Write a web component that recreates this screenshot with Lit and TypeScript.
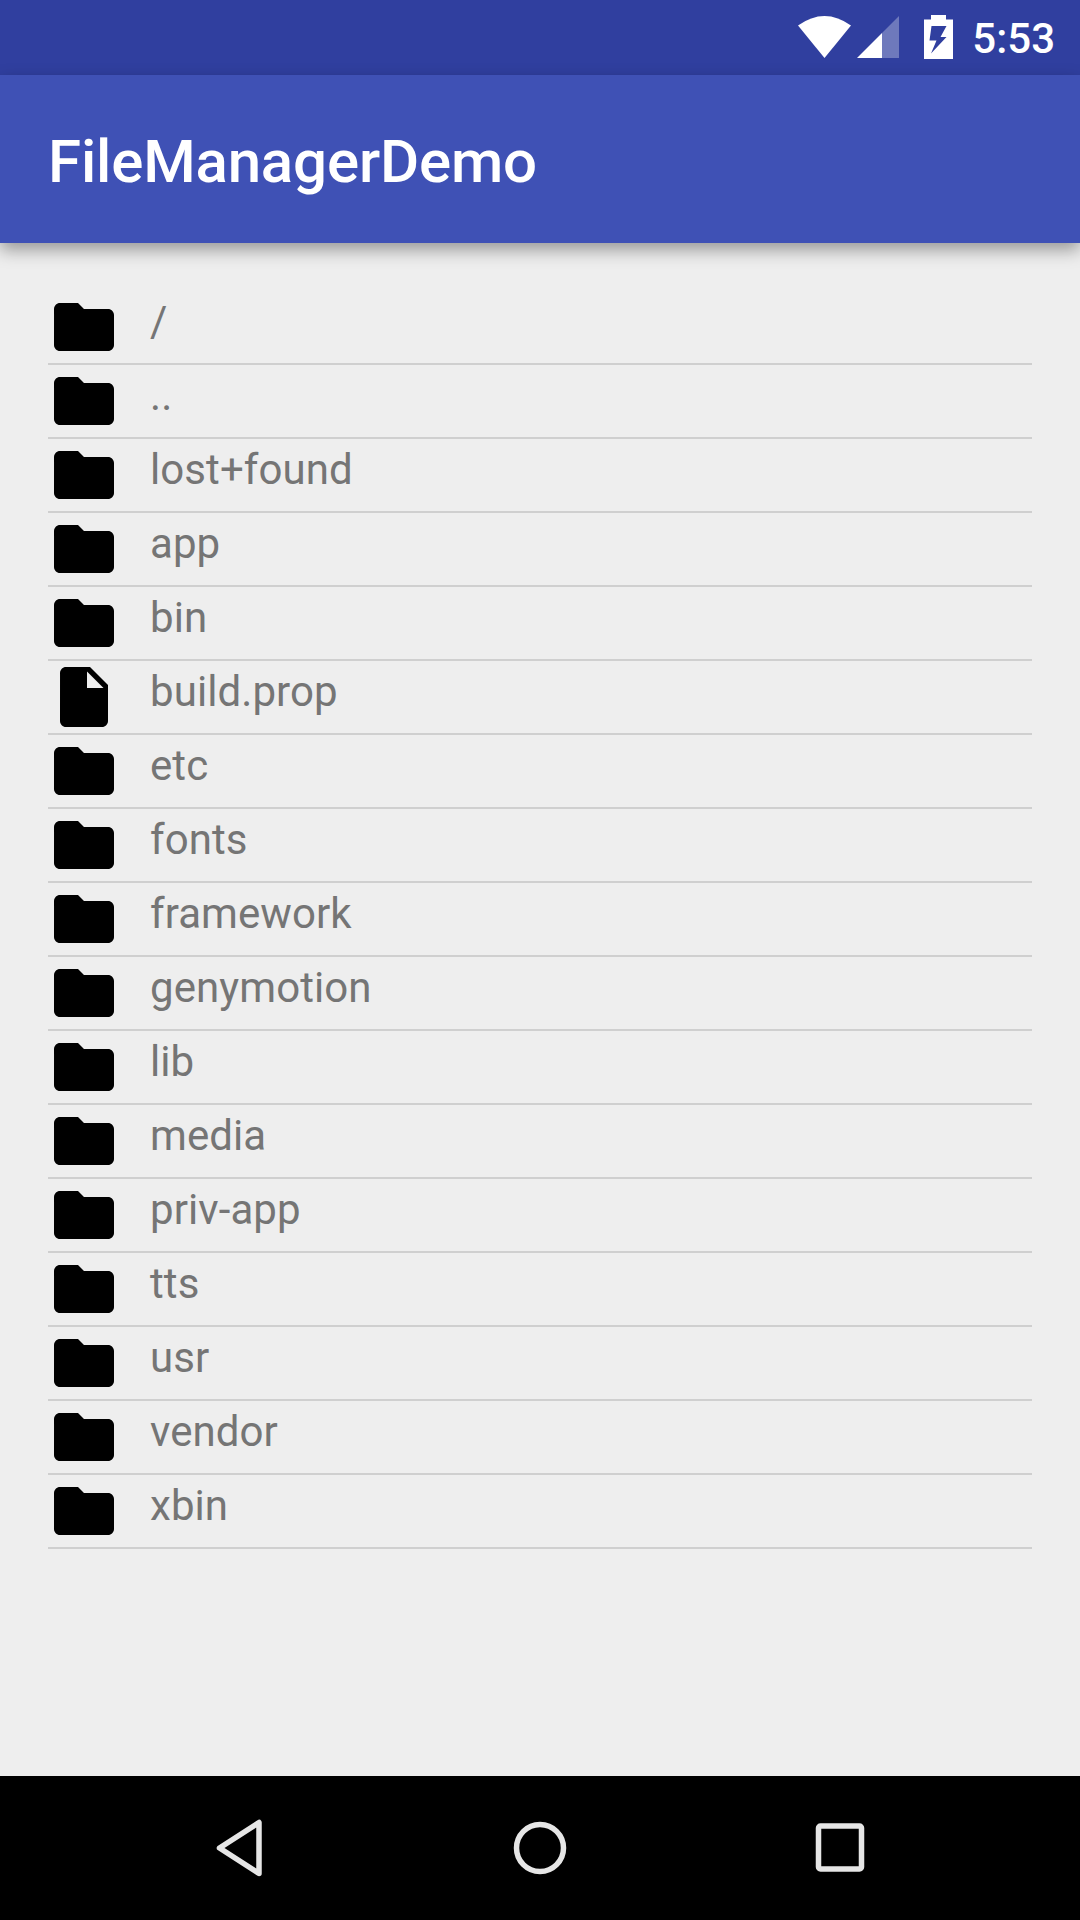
import { LitElement, html, css, svg } from "lit";
import { customElement } from "lit/decorators.js";

const FOLDER = "M10 4H4c-1.1 0-1.99.9-1.99 2L2 18c0 1.1.9 2 2 2h16c1.1 0 2-.9 2-2V8c0-1.1-.9-2-2-2h-8l-2-2z";
const FILE = "M6 2c-1.1 0-1.99.9-1.99 2L4 20c0 1.1.89 2 1.99 2H18c1.1 0 2-.9 2-2V8l-6-6H6zm7 7V3.5L18.5 9H13z";

const ENTRIES: { name: string; file?: boolean }[] = [
  { name: "/" }, { name: ".." }, { name: "lost+found" }, { name: "app" }, { name: "bin" },
  { name: "build.prop", file: true }, { name: "etc" }, { name: "fonts" }, { name: "framework" },
  { name: "genymotion" }, { name: "lib" }, { name: "media" }, { name: "priv-app" }, { name: "tts" },
  { name: "usr" }, { name: "vendor" }, { name: "xbin" },
];

@customElement("app-root")
export class AppRoot extends LitElement {
  static styles = css`
    :host {
      display: flex;
      flex-direction: column;
      width: 1080px;
      height: 1920px;
      background: #eeeeee;
      font-family: Roboto, "Liberation Sans", sans-serif;
      overflow: hidden;
    }
    .status {
      height: 75px;
      flex: none;
      background: #303f9f;
      display: flex;
      justify-content: flex-end;
      align-items: flex-start;
      padding-right: 25px;
      color: #fff;
    }
    .status svg { display: block; flex: none; }
    .wifi { margin-top: 16px; }
    .signal { margin-top: 16px; margin-left: 6px; }
    .battery { margin-top: 15px; margin-left: 25px; }
    .time {
      margin-left: 19px;
      font-size: 42px;
      font-weight: 500;
      line-height: 47px;
      margin-top: 15px;
    }
    .bar {
      height: 168px;
      flex: none;
      box-sizing: border-box;
      padding: 4px 0 0 48px;
      background: #3f51b5;
      box-shadow: 0 7px 16px rgba(0, 0, 0, 0.36);
      display: flex;
      align-items: center;
      color: #fff;
      font-size: 60px;
      font-weight: 500;
      letter-spacing: -0.16px;
      position: relative;
    }
    .list {
      flex: 1;
      padding: 48px 48px 0;
      display: flex;
      flex-direction: column;
    }
    .row {
      height: 72px;
      border-bottom: 2px solid #cfcfcf;
      display: flex;
      align-items: flex-start;
      box-sizing: content-box;
    }
    .row svg { width: 72px; height: 72px; display: block; flex: none; fill: #000; }
    .row span {
      margin-left: 30px;
      font-size: 42px;
      line-height: 50px;
      margin-top: 6px;
      letter-spacing: 0.08px;
      color: #757575;
    }
    .nav {
      height: 144px;
      flex: none;
      background: #000;
      display: grid;
      grid-template-columns: repeat(3, 300px);
      padding-left: 90px;
      align-items: center;
      justify-items: center;
    }
    .nav svg { display: block; fill: none; stroke: #e6e6e6; stroke-width: 5.5; stroke-linejoin: round; }
  `;

  render() {
    return html`
      <div class="status">
        <svg class="wifi" width="53" height="42" viewBox="0 0 53 42">
          <path d="M0 9.500Q26.500-9.500 53 9.500L26.500 42z" fill="#fff" />
        </svg>
        <svg class="signal" width="42" height="42" viewBox="0 0 42 42">
          <path d="M42 0V42H25V17z" fill="#fff" fill-opacity=".3" />
          <path d="M25 17V42H0z" fill="#fff" />
        </svg>
        <svg class="battery" width="29" height="44" viewBox="0 0 29 44">
          <path
            fill-rule="evenodd"
            fill="#fff"
            d="M7 0H22V4.500H29V44H0V4.500H7zM7.500 11H22.500L16.500 22H22.500L7 38.500L12.500 25.500H5.500z"
          />
        </svg>
        <div class="time">5:53</div>
      </div>
      <div class="bar">FileManagerDemo</div>
      <div class="list">
        ${ENTRIES.map(
          (e) => html`<div class="row">
            <svg viewBox="0 0 24 24">${svg`<path d=${e.file ? FILE : FOLDER} />`}</svg>
            <span>${e.name}</span>
          </div>`
        )}
      </div>
      <div class="nav">
        <svg width="60" height="64" viewBox="0 0 60 64">
          <path d="M49 6.500V57.500L9.500 32z" />
        </svg>
        <svg width="60" height="60" viewBox="0 0 60 60">
          <circle cx="30" cy="30" r="23.500" />
        </svg>
        <svg width="60" height="60" viewBox="0 0 60 60">
          <rect x="8.500" y="8" width="43" height="43" rx="2" />
        </svg>
      </div>
    `;
  }
}
